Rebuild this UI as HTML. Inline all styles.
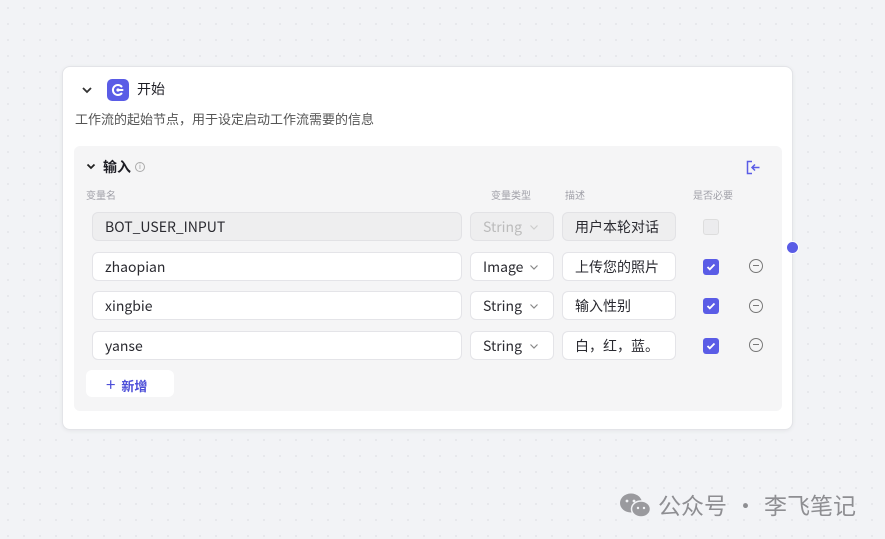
<!DOCTYPE html>
<html><head><meta charset="utf-8"><style>
*{box-sizing:border-box;margin:0;padding:0}
body{width:885px;height:539px;overflow:hidden;background:#f2f3f6;background-image:radial-gradient(#e3e4e8 1px,transparent 1px);background-size:16px 16px;font-family:"Noto Sans CJK SC","Liberation Sans",sans-serif;position:relative;color:#1d1d24}
.card{position:absolute;left:62px;top:66px;width:731px;height:364px;background:#fff;border:1px solid #e3e4e8;border-radius:8px;box-shadow:0 1px 4px rgba(0,0,0,.06)}
.abs{position:absolute}
.panel{position:absolute;left:11px;top:79px;width:708px;height:265px;background:#f5f5f6;border-radius:6px}
.inp{position:absolute;height:29px;border:1px solid #e4e4e8;border-radius:6px;background:#fff;font-size:14px;line-height:29px;padding-left:12px;color:#2a2a30}
.dis{background:#eeeeef;border-color:#e2e2e5}
.cb{position:absolute;width:16px;height:16px;border-radius:3px;background:#5a5ce6}
.cb svg{position:absolute;left:3px;top:3px}
.min{position:absolute;width:14px;height:14px;border:1.3px solid #777;border-radius:50%}
.min:after{content:"";position:absolute;left:3px;top:5.2px;width:5.5px;height:1.3px;background:#777}
.hd{position:absolute;font-size:10px;color:#a0a0a8;top:41px}
.chev{position:absolute;left:58px;top:11px}
</style></head><body>
<div class="card">
 <svg class="abs" style="left:18px;top:19px" width="12" height="8" viewBox="0 0 12 8"><path d="M2 2l4 4 4-4" stroke="#333" stroke-width="1.8" fill="none"/></svg>
 <div class="abs" style="left:44px;top:12px;width:22px;height:22px;border-radius:5px;background:#5a5ce6">
  <svg width="22" height="22" viewBox="0 0 22 22"><path d="M14.5 7.5a5 5 0 1 0 0 7" stroke="#fff" stroke-width="2" fill="none" stroke-linecap="round"/><circle cx="11" cy="11" r="1.6" fill="#fff"/><path d="M11 11h4.5" stroke="#fff" stroke-width="2" stroke-linecap="round"/></svg>
 </div>
 <div class="abs" style="left:74px;top:12px;font-size:14px">开始</div>
 <div class="abs" style="left:12px;top:42px;font-size:13px;color:#555">工作流的起始节点，用于设定启动工作流需要的信息</div>
 <div class="panel">
  <svg class="abs" style="left:12px;top:17px" width="10" height="7" viewBox="0 0 10 7"><path d="M1.5 1.5l3.5 3.5 3.5-3.5" stroke="#222" stroke-width="1.8" fill="none"/></svg>
  <div class="abs" style="left:29px;top:11px;font-size:14px;font-weight:bold">输入</div>
  <div class="abs" style="left:61px;top:16px;width:10px;height:10px;border:1px solid #aaa;border-radius:50%;font-size:7px;line-height:8px;text-align:center;color:#999">i</div>
  <svg class="abs" style="left:672px;top:14px" width="15" height="15" viewBox="0 0 15 15"><path d="M6 1.5H1.5v12H6" stroke="#5a5ce6" stroke-width="1.5" fill="none"/><path d="M13.5 7.5H6M9 4.5l-3 3 3 3" stroke="#5a5ce6" stroke-width="1.5" fill="none"/></svg>
  <div class="hd" style="left:12px">变量名</div>
  <div class="hd" style="left:417px">变量类型</div>
  <div class="hd" style="left:491px">描述</div>
  <div class="hd" style="left:619px">是否必要</div>
 </div>
</div>
<div class="inp dis" style="left:92px;top:212px;width:370px">BOT_USER_INPUT</div>
<div class="inp dis" style="left:470px;top:212px;width:84px;color:#bbb">String<svg class="chev" width="10" height="7" viewBox="0 0 10 7"><path d="M1.5 1.5l3.5 3.5 3.5-3.5" stroke="#ccc" stroke-width="1.2" fill="none"/></svg></div>
<div class="inp dis" style="left:562px;top:212px;width:114px">用户本轮对话</div>
<div class="abs" style="left:703px;top:219px;width:16px;height:16px;border-radius:3px;background:#ececee;border:1px solid #ddd"></div>

<div class="inp" style="left:92px;top:252px;width:370px">zhaopian</div>
<div class="inp" style="left:470px;top:252px;width:84px">Image<svg class="chev" width="10" height="7" viewBox="0 0 10 7"><path d="M1.5 1.5l3.5 3.5 3.5-3.5" stroke="#888" stroke-width="1.2" fill="none"/></svg></div>
<div class="inp" style="left:562px;top:252px;width:114px">上传您的照片</div>

<div class="inp" style="left:92px;top:291px;width:370px">xingbie</div>
<div class="inp" style="left:470px;top:291px;width:84px">String<svg class="chev" width="10" height="7" viewBox="0 0 10 7"><path d="M1.5 1.5l3.5 3.5 3.5-3.5" stroke="#888" stroke-width="1.2" fill="none"/></svg></div>
<div class="inp" style="left:562px;top:291px;width:114px">输入性别</div>

<div class="inp" style="left:92px;top:331px;width:370px">yanse</div>
<div class="inp" style="left:470px;top:331px;width:84px">String<svg class="chev" width="10" height="7" viewBox="0 0 10 7"><path d="M1.5 1.5l3.5 3.5 3.5-3.5" stroke="#888" stroke-width="1.2" fill="none"/></svg></div>
<div class="inp" style="left:562px;top:331px;width:114px">白，红，蓝。</div>

<div class="cb" style="left:703px;top:259px"><svg width="10" height="10" viewBox="0 0 10 10"><path d="M1.5 5l2.3 2.3L8.5 2.5" stroke="#fff" stroke-width="1.8" fill="none"/></svg></div>
<div class="cb" style="left:703px;top:298px"><svg width="10" height="10" viewBox="0 0 10 10"><path d="M1.5 5l2.3 2.3L8.5 2.5" stroke="#fff" stroke-width="1.8" fill="none"/></svg></div>
<div class="cb" style="left:703px;top:338px"><svg width="10" height="10" viewBox="0 0 10 10"><path d="M1.5 5l2.3 2.3L8.5 2.5" stroke="#fff" stroke-width="1.8" fill="none"/></svg></div>
<div class="min" style="left:749px;top:259px"></div>
<div class="min" style="left:749px;top:299px"></div>
<div class="min" style="left:749px;top:338px"></div>

<div class="abs" style="left:86px;top:370px;width:88px;height:27px;background:#fff;border-radius:6px;font-size:13px;line-height:27px;color:#4d4fd8;font-weight:bold;padding-left:20px"><span style="font-size:17px;font-weight:normal">+</span>&nbsp; 新增</div>

<div class="abs" style="left:786px;top:241px;width:13px;height:13px;border-radius:50%;background:#5a5ce6;border:1px solid #fff"></div>

<svg class="abs" style="left:619px;top:492px" width="34" height="26" viewBox="0 0 34 26"><ellipse cx="12" cy="11" rx="11" ry="9.5" fill="#9a9a9e"/><ellipse cx="22" cy="17" rx="9.5" ry="8" fill="#9a9a9e" stroke="#f2f3f6" stroke-width="1.5"/><circle cx="8" cy="9" r="1.4" fill="#f2f3f6"/><circle cx="15" cy="9" r="1.4" fill="#f2f3f6"/><circle cx="19" cy="16" r="1.2" fill="#f2f3f6"/><circle cx="25" cy="16" r="1.2" fill="#f2f3f6"/></svg>
<div class="abs" style="left:658px;top:487px;font-size:23px;color:#8e8e92;white-space:nowrap">公众号<span style="margin:0 7px">·</span>李飞笔记</div>
</body></html>
